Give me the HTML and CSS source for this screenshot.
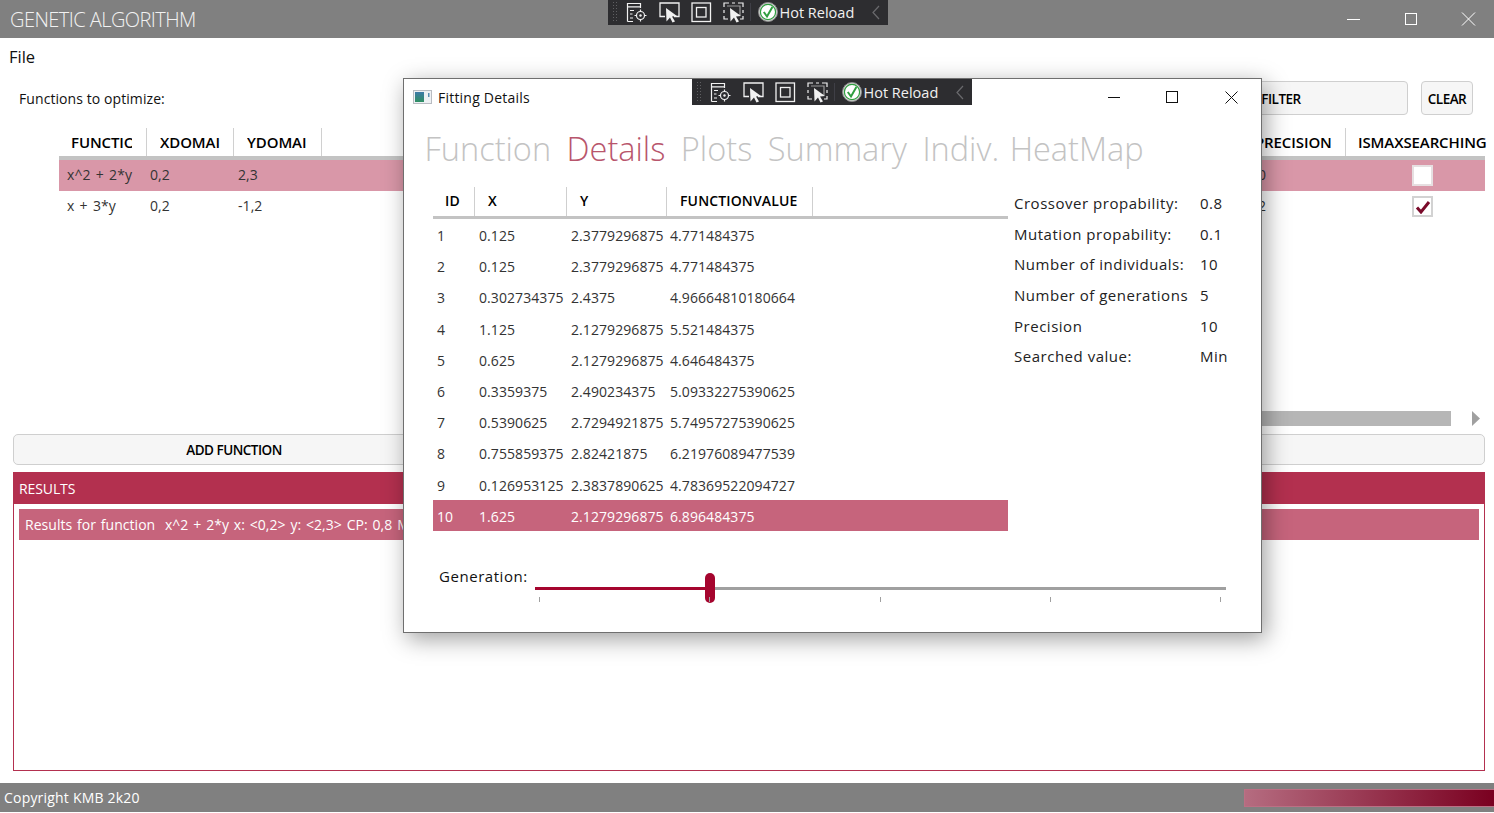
FILE: index.html
```html
<!DOCTYPE html>
<html lang="en">
<head>
<meta charset="utf-8">
<title>Genetic Algorithm</title>
<link rel="stylesheet" href="styles.css">
</head>
<body>
<svg class="defs" width="0" height="0" aria-hidden="true">
  <defs>
    <linearGradient id="ic-grad" x1="0" y1="0" x2="0" y2="1">
      <stop offset="0" stop-color="#3d7aa8"/>
      <stop offset="1" stop-color="#2f8f62"/>
    </linearGradient>
    <g id="tb-inspect" fill="none" stroke="#f1f1f1" stroke-width="1.2">
      <path d="M1.5 19.5V1.5H14.5V6M1.5 4.8H14.5M4 8.5H8M4 12H6.5M4 16H7M1.5 19.5H7"/>
      <circle cx="14.5" cy="13.5" r="4"/>
      <path d="M14.5 7.5V10M14.5 17V19.5M8.5 13.5H11M18 13.5H20.5"/>
      <circle cx="14.5" cy="13.5" r="1.2" fill="#f1f1f1" stroke="none"/>
    </g>
    <g id="tb-select">
      <path d="M6 14.5H1V1H20V14.5H15" fill="none" stroke="#f1f1f1" stroke-width="1.3"/>
      <path d="M7 6 18 14 13 14.5 16 19.5 13.5 20.5 11 15.5 7.5 19.5Z" fill="#f1f1f1"/>
    </g>
    <g id="tb-box" fill="none" stroke="#f1f1f1" stroke-width="1.3">
      <rect x="1" y="1" width="18.5" height="18.5"/>
      <rect x="5.5" y="5.5" width="9.5" height="9.5"/>
    </g>
    <g id="tb-track">
      <path d="M1 5V1H6M9 1H12M15 1H20V5M1 8V11M20 8V11M1 14V17H5M20 14V17H17" fill="none" stroke="#f1f1f1" stroke-width="1.2"/>
      <path d="M4 4H17V13H15" fill="none" stroke="#9a9a9a" stroke-width="1.2"/>
      <path d="M7 6 18 14 13 14.5 16 19.5 13.5 20.5 11 15.5 7.5 19.5Z" fill="#f1f1f1"/>
    </g>
    <g id="tb-hot">
      <circle cx="10" cy="10" r="9.5" fill="#d8d8d8" stroke="#8a8a8a" stroke-width="1"/>
      <circle cx="10" cy="10" r="7.6" fill="#fff" stroke="#2f9e3f" stroke-width="1.2"/>
      <path d="M5.8 10 9 14.5 14.4 5" fill="none" stroke="#2f9e3f" stroke-width="2"/>
    </g>
    <g id="tb-back"><path d="M7 1 1 7.5 7 14" fill="none" stroke="#6a6a6d" stroke-width="1.2"/></g>
  </defs>
</svg>

<div class="app">
  <header class="titlebar">
    <span class="app-title">GENETIC ALGORITHM</span>
    <div class="win-controls">
      <svg class="wc" width="58" height="14" viewBox="0 0 58 14"><path d="M0 7.5H13" stroke="#fff" stroke-width="1" fill="none"/></svg>
      <svg class="wc" width="56" height="14" viewBox="0 0 56 14"><rect x=".5" y="1.5" width="11" height="11" stroke="#fff" fill="none"/></svg>
      <svg class="wc" width="15" height="14" viewBox="0 0 15 14"><path d="M1 .5 14 13.5M14 .5 1 13.5" stroke="#fff" fill="none"/></svg>
    </div>
  </header>

  <nav class="menubar"><span class="menu-item">File</span></nav>

  <section class="toolbar-row">
    <span class="section-label">Functions to optimize:</span>
    <button class="btn btn-filter">FILTER</button>
    <button class="btn btn-clear">CLEAR</button>
  </section>

  <section class="fn-grid">
    <div class="fn-row fn-head">
      <div class="fn-h"><span class="clip clip-first">FUNCTION</span></div>
      <div class="fn-h"><span class="clip">XDOMAIN</span></div>
      <div class="fn-h"><span class="clip">YDOMAIN</span></div>
      <div class="fn-h fn-spacer"></div>
      <div class="fn-h fn-h-prec">PRECISION</div>
      <div class="fn-h fn-h-end">ISMAXSEARCHING</div>
    </div>
    <div class="fn-row fn-body fn-selected">
      <div class="fn-c">x^2 + 2*y</div><div class="fn-c">0,2</div><div class="fn-c">2,3</div><div class="fn-c"></div><div class="fn-c">10</div>
      <div class="fn-c fn-check"><span class="checkbox"></span></div>
    </div>
    <div class="fn-row fn-body">
      <div class="fn-c">x + 3*y</div><div class="fn-c">0,2</div><div class="fn-c">-1,2</div><div class="fn-c"></div><div class="fn-c">12</div>
      <div class="fn-c fn-check"><span class="checkbox"><svg width="16" height="14" viewBox="0 0 16 14"><path d="M2 7.5 6 12 14 2" fill="none" stroke="#7a0a2a" stroke-width="3"/></svg></span></div>
    </div>
    <div class="h-scroll">
      <div class="h-thumb"></div>
      <svg width="9" height="15" viewBox="0 0 9 15"><path d="M0 0 8 7.5 0 15Z" fill="#a0a0a0"/></svg>
    </div>
  </section>

  <div class="action-row">
    <button class="btn btn-add">ADD FUNCTION</button>
    <button class="btn btn-run"></button>
  </div>

  <section class="results">
    <h2 class="results-head">RESULTS</h2>
    <div class="results-item">Results for function&nbsp; x^2 + 2*y x: &lt;0,2&gt; y: &lt;2,3&gt; CP: 0,8 MP:</div>
  </section>

  <footer class="statusbar">
    <span class="copyright">Copyright KMB 2k20</span>
    <div class="progress"></div>
  </footer>
</div>

<div class="hot-toolbar hot-toolbar-main">
  <span class="grip"></span>
  <svg class="ti" width="22" height="21" viewBox="0 0 22 21"><use href="#tb-inspect"/></svg>
  <svg class="ti" width="22" height="21" viewBox="0 0 22 21"><use href="#tb-select"/></svg>
  <svg class="ti" width="21" height="21" viewBox="0 0 21 21"><use href="#tb-box"/></svg>
  <svg class="ti" width="22" height="21" viewBox="0 0 22 21"><use href="#tb-track"/></svg>
  <span class="tb-sep"></span>
  <svg class="hot-ic" width="20" height="20" viewBox="0 0 20 20"><use href="#tb-hot"/></svg>
  <span class="hot-label">Hot Reload</span>
  <svg class="back-ic" width="8" height="15" viewBox="0 0 8 15"><use href="#tb-back"/></svg>
</div>

<div class="window">
  <div class="win-title">
    <svg class="win-icon" width="19" height="14" viewBox="0 0 19 14">
      <rect x=".5" y=".5" width="18" height="13" fill="#eef1f4" stroke="#b8bcc2"/>
      <rect x="2" y="2" width="9" height="10" fill="url(#ic-grad)"/>
      <rect x="15" y="3" width="1.5" height="4" fill="#5a8fb0"/>
    </svg>
    <span class="win-name">Fitting Details</span>
    <div class="win-controls">
      <svg class="wc" width="58" height="12" viewBox="0 0 58 12"><path d="M0 6.5H12" stroke="#111" fill="none"/></svg>
      <svg class="wc" width="59" height="12" viewBox="0 0 59 12"><rect x=".5" y=".5" width="11" height="11" stroke="#111" fill="none"/></svg>
      <svg class="wc" width="13" height="13" viewBox="0 0 13 13"><path d="M.5.5 12.5 12.5M12.5.5.5 12.5" stroke="#111" fill="none"/></svg>
    </div>
  </div>

  <div class="hot-toolbar hot-toolbar-win">
    <span class="grip"></span>
    <svg class="ti" width="22" height="21" viewBox="0 0 22 21"><use href="#tb-inspect"/></svg>
    <svg class="ti" width="22" height="21" viewBox="0 0 22 21"><use href="#tb-select"/></svg>
    <svg class="ti" width="21" height="21" viewBox="0 0 21 21"><use href="#tb-box"/></svg>
    <svg class="ti" width="22" height="21" viewBox="0 0 22 21"><use href="#tb-track"/></svg>
    <span class="tb-sep"></span>
    <svg class="hot-ic" width="20" height="20" viewBox="0 0 20 20"><use href="#tb-hot"/></svg>
    <span class="hot-label">Hot Reload</span>
    <svg class="back-ic" width="8" height="15" viewBox="0 0 8 15"><use href="#tb-back"/></svg>
  </div>

  <div class="tabs">
    <span class="tab">Function</span>
    <span class="tab tab-active">Details</span>
    <span class="tab">Plots</span>
    <span class="tab">Summary</span>
    <span class="tab">Indiv.</span>
    <span class="tab">HeatMap</span>
  </div>

  <div class="win-content">
    <div class="fit-grid">
      <div class="fit-row fit-head">
        <div class="fit-h">ID</div><div class="fit-h">X</div><div class="fit-h">Y</div><div class="fit-h">FUNCTIONVALUE</div><div class="fit-h fit-h-last"></div>
      </div>
      <div class="fit-row"><div class="fit-c">1</div><div class="fit-c">0.125</div><div class="fit-c">2.3779296875</div><div class="fit-c">4.771484375</div></div>
      <div class="fit-row"><div class="fit-c">2</div><div class="fit-c">0.125</div><div class="fit-c">2.3779296875</div><div class="fit-c">4.771484375</div></div>
      <div class="fit-row"><div class="fit-c">3</div><div class="fit-c">0.302734375</div><div class="fit-c">2.4375</div><div class="fit-c">4.96664810180664</div></div>
      <div class="fit-row"><div class="fit-c">4</div><div class="fit-c">1.125</div><div class="fit-c">2.1279296875</div><div class="fit-c">5.521484375</div></div>
      <div class="fit-row"><div class="fit-c">5</div><div class="fit-c">0.625</div><div class="fit-c">2.1279296875</div><div class="fit-c">4.646484375</div></div>
      <div class="fit-row"><div class="fit-c">6</div><div class="fit-c">0.3359375</div><div class="fit-c">2.490234375</div><div class="fit-c">5.09332275390625</div></div>
      <div class="fit-row"><div class="fit-c">7</div><div class="fit-c">0.5390625</div><div class="fit-c">2.7294921875</div><div class="fit-c">5.74957275390625</div></div>
      <div class="fit-row"><div class="fit-c">8</div><div class="fit-c">0.755859375</div><div class="fit-c">2.82421875</div><div class="fit-c">6.21976089477539</div></div>
      <div class="fit-row"><div class="fit-c">9</div><div class="fit-c">0.126953125</div><div class="fit-c">2.3837890625</div><div class="fit-c">4.78369522094727</div></div>
      <div class="fit-row fit-selected"><div class="fit-c">10</div><div class="fit-c">1.625</div><div class="fit-c">2.1279296875</div><div class="fit-c">6.896484375</div></div>
    </div>

    <dl class="facts">
      <dt>Crossover propability:</dt><dd>0.8</dd>
      <dt>Mutation propability:</dt><dd>0.1</dd>
      <dt>Number of individuals:</dt><dd>10</dd>
      <dt>Number of generations</dt><dd>5</dd>
      <dt>Precision</dt><dd>10</dd>
      <dt>Searched value:</dt><dd>Min</dd>
    </dl>
  </div>

  <div class="gen-row">
    <span class="gen-label">Generation:</span>
    <div class="slider">
      <div class="track"><div class="track-fill"></div></div>
      <div class="thumb"></div>
      <div class="ticks"><i></i><i></i><i></i><i></i><i></i></div>
    </div>
  </div>
</div>
</body>
</html>
```
FILE: styles.css
```css
* { box-sizing: border-box; }
html, body { margin: 0; padding: 0; }
body {
  width: 1494px;
  height: 813px;
  overflow: hidden;
  background: #fff;
  color: #111;
  font-family: "Open Sans", "Noto Sans", "Liberation Sans", sans-serif;
  font-size: 14px;
  letter-spacing: 0.08px;
  position: relative;
}
.defs { position: absolute; }

.app { display: flex; flex-direction: column; height: 812px; }

.titlebar {
  height: 38px;
  background: #808080;
  display: flex;
  align-items: center;
  padding: 0 18px 0 10px;
  flex: none;
}
.app-title { color: #f2f2f2; font-size: 20px; font-weight: 300; letter-spacing: -0.55px; }
.win-controls { margin-left: auto; display: flex; align-items: center; }
.wc { display: block; flex: none; }

.menubar { height: 38px; padding: 8px 0 0 9px; flex: none; }
.menu-item { font-size: 16.5px; letter-spacing: 0; line-height: 22px; }

.toolbar-row {
  height: 47px;
  margin-top: 5px;
  display: flex;
  align-items: flex-start;
  padding-left: 19px;
  flex: none;
}
.section-label { line-height: 35px; }
.btn {
  background: #f6f6f6;
  border: 1px solid #cfcfcf;
  border-radius: 4px;
  font: inherit;
  font-weight: 600;
  font-size: 13.5px;
  letter-spacing: -0.5px;
  color: #000;
  padding: 0;
}
.btn-filter { width: 254px; height: 34px; margin-left: auto; text-align: center; padding-top: 2px; }
.btn-clear { width: 52px; height: 34px; margin: 0 21px 0 13px; padding-top: 2px; }

.fn-grid { height: 306px; margin-left: 59px; margin-right: 9px; flex: none; display: flex; flex-direction: column; }
.fn-row { display: grid; grid-template-columns: 88px 87px 88px 924px 100px 139px; }
.fn-head { height: 32px; border-bottom: 4px solid #c3c3c3; }
.fn-h {
  border-right: 1px solid #d0d0d0;
  padding-left: 13px;
  line-height: 28px;
  font-size: 15px;
  font-weight: 600;
  color: #000;
  letter-spacing: -0.1px;
  white-space: nowrap;
}
.fn-h:first-child { padding-left: 12px; }
.clip { display: block; width: 60px; overflow: hidden; }
.clip-first { width: 61px; }
.fn-spacer { border-right: 0; }
.fn-h-prec { padding-left: 9px; }
.fn-h-end { border-right: 0; padding-left: 12px; }
.fn-body { height: 31px; line-height: 30px; word-spacing: 1.5px; }
.fn-c { padding-left: 4px; color: #333; }
.fn-c:first-child { padding-left: 8px; }
.fn-c:nth-child(2) { padding-left: 3px; }
.fn-selected { background: #d997a8; }
.fn-check { display: flex; align-items: center; padding-left: 66px; }
.checkbox {
  width: 21px;
  height: 21px;
  background: #fff;
  border: 2px solid #d2d2d2;
  display: flex;
  align-items: center;
  justify-content: center;
}
.fn-selected .checkbox { border-color: #e6dfe1; }
.h-scroll { margin-top: auto; margin-bottom: 8px; display: flex; align-items: center; height: 15px; justify-content: flex-end; padding-right: 4px; gap: 21px; }
.h-thumb { width: 900px; height: 15px; background: #b6b6b6; }

.action-row { display: flex; gap: 6px; margin: 0 9px 0 13px; height: 31px; flex: none; }
.btn-add { width: 442px; border-radius: 5px; }
.btn-run { flex: 1; border-radius: 5px; }

.results {
  margin: 7px 9px 0 13px;
  height: 299px;
  flex: none;
  border: 1px solid #b3304f;
  border-top: 0;
}
.results-head {
  margin: 0;
  height: 32px;
  background: #b3304f;
  color: #fff;
  font-size: 14px;
  font-weight: 400;
  line-height: 33px;
  padding-left: 5px;
  letter-spacing: -0.1px;
}
.results-item {
  margin: 5px 5px 0;
  height: 31px;
  line-height: 31px;
  padding-left: 6px;
  background: #c6647c;
  color: #fff;
  letter-spacing: 0.03px;
  word-spacing: 1.2px;
  white-space: nowrap;
  overflow: hidden;
}

.statusbar {
  margin-top: 12px;
  height: 29px;
  flex: none;
  background: #808080;
  display: flex;
  align-items: center;
  justify-content: space-between;
  padding-left: 4px;
}
.copyright { color: #fff; letter-spacing: 0.2px; }
.progress {
  width: 250px;
  height: 18px;
  background: linear-gradient(90deg, #b56c80, #7a0020);
  border: 1px solid #bc6f84;
  border-right: 0;
}

/* Floating developer toolbar */
.hot-toolbar {
  position: absolute;
  width: 280px;
  height: 26px;
  background: #2d2d30;
  display: flex;
  align-items: center;
  z-index: 5;
}
.hot-toolbar-main { left: 608px; top: -1px; }
.hot-toolbar-win { left: 288px; top: 0; }
.grip {
  width: 5px;
  height: 22px;
  margin-left: 4px;
  flex: none;
  background-image: radial-gradient(#5f5f62 0.7px, transparent 0.8px);
  background-size: 3px 3px;
}
.ti { flex: none; margin-left: 9px; }
.ti + .ti { margin-left: 10.5px; }
.tb-sep { width: 1px; height: 18px; background: #3f3f46; margin: 0 7px 0 5px; flex: none; }
.hot-ic { flex: none; }
.hot-label { color: #f1f1f1; font-size: 14.5px; margin-left: 2px; letter-spacing: 0; white-space: nowrap; }
.back-ic { margin-left: auto; margin-right: 8px; flex: none; }

/* Child window */
.window {
  position: absolute;
  left: 403px;
  top: 78px;
  width: 859px;
  height: 555px;
  background: #fff;
  border: 1px solid #6f6f6f;
  box-shadow: 4px 6px 22px rgba(0, 0, 0, 0.38);
  z-index: 3;
  display: flex;
  flex-direction: column;
}
.win-title { height: 38px; display: flex; align-items: center; padding: 0 23px 2px 9px; flex: none; }
.win-icon { flex: none; }
.win-name { margin-left: 6px; letter-spacing: 0.22px; }

.tabs { display: flex; gap: 15.5px; padding: 5px 0 0 20.5px; height: 70px; flex: none; }
.tab { font-size: 32.5px; font-weight: 300; line-height: 54px; color: #c3c3c3; letter-spacing: 0; white-space: nowrap; }
.tab:last-child { margin-left: -5px; }
.tab-active { color: #b8556c; }

.win-content { display: flex; height: 347px; flex: none; }
.fit-grid { width: 575px; margin-left: 29px; flex: none; }
.fit-row { display: grid; grid-template-columns: 42px 92px 100px 146px 1fr; height: 31.2px; line-height: 31.2px; color: #333; }
.fit-head { height: 32px; border-bottom: 3px solid #c3c3c3; line-height: 28px; }
.fit-h { font-weight: 600; color: #000; padding-left: 13px; border-right: 1px solid #cfcfcf; letter-spacing: 0.14px; white-space: nowrap; }
.fit-h:first-child { padding-left: 12px; }
.fit-h-last { border-right: 0; }
.fit-c { padding: 1px 0 0 4px; white-space: nowrap; }
.fit-c:last-child { padding-left: 3px; }
.fit-selected { background: #c6647c; color: #fff; }

.facts {
  margin: 0;
  padding: 1px 0 0 6px;
  display: grid;
  grid-template-columns: 186px auto;
  grid-auto-rows: 30.65px;
  align-content: start;
  font-size: 15px;
  line-height: 30.65px;
  letter-spacing: 0.52px;
  color: #222;
}
.facts dt, .facts dd { margin: 0; white-space: nowrap; }

.gen-row { display: flex; height: 50px; padding-left: 35px; margin-top: 30px; flex: none; }
.gen-label { font-size: 15px; letter-spacing: 0.55px; width: 96px; line-height: 24px; flex: none; }
.slider { position: relative; width: 691px; height: 50px; }
.track { position: absolute; top: 23px; left: 0; right: 0; height: 3px; background: #a0a0a0; }
.track-fill { width: 175px; height: 3px; background: #a5052e; }
.thumb { position: absolute; left: 170px; top: 9px; width: 10px; height: 30px; border-radius: 5px; background: #a5052e; }
.ticks { position: absolute; top: 33px; left: 4px; right: 5px; display: flex; justify-content: space-between; }
.ticks i { width: 1px; height: 5px; background: #a0a0a0; display: block; }
```
